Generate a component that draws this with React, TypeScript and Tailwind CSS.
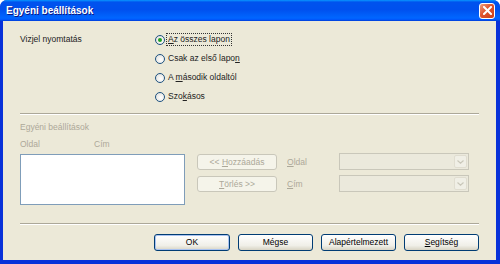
import React from 'react';

// Windows XP style "Egyéni beállítások" dialog

const font = "font-['Liberation_Sans',Arial,sans-serif]";

function Radio({ checked, focused, children }: { checked?: boolean; focused?: boolean; children: React.ReactNode }) {
  return (
    <div className="h-[19px] flex items-center">
      <span className="w-[10px] h-[10px] rounded-full border border-[#1c5180] bg-[radial-gradient(circle_at_60%_60%,#ffffff,#dcdcd7)] flex items-center justify-center shrink-0">
        {checked && <span className="w-[4px] h-[4px] rounded-full bg-[#21a121]" />}
      </span>
      <span className={`ml-[2px] px-[1px] leading-[11px] ${focused ? 'outline outline-1 outline-dotted outline-[#333]' : ''}`}>
        {children}
      </span>
    </div>
  );
}

function Separator() {
  return (
    <div className="flex flex-col">
      <div className="h-px bg-[#aca899]" />
      <div className="h-px bg-white" />
    </div>
  );
}

function XpButton({ children, className = '' }: { children: React.ReactNode; className?: string }) {
  return (
    <div
      className={`h-[17px] rounded-[3px] border border-[#003c74] bg-[linear-gradient(#ffffff,#f0efe8_70%,#d8d4c4)] flex items-center justify-center text-black ${className}`}
    >
      {children}
    </div>
  );
}

function DisabledButton({ children }: { children: React.ReactNode }) {
  return (
    <div className="w-[80px] h-[16px] rounded-[3px] border border-[#c9c7ba] bg-[#f5f4ea] flex items-center justify-center text-[#aca899]">
      {children}
    </div>
  );
}

function DisabledCombo() {
  return (
    <div className="w-[130px] h-[17px] border border-[#c9c7ba] bg-[#ebe9dc] flex justify-end p-px">
      <div className="w-[13px] h-full rounded-[2px] bg-[#f0efe6] border border-[#e0ddd0] flex items-center justify-center">
        <svg width="7" height="4" viewBox="0 0 7 4">
          <path d="M0.5 0.5 L3.5 3.2 L6.5 0.5" fill="none" stroke="#c9c7ba" strokeWidth="1.2" />
        </svg>
      </div>
    </div>
  );
}

export default function App() {
  return (
    <div className={`w-[500px] h-[264px] bg-[#0831d9] rounded-t-[7px] flex flex-col overflow-hidden text-[8.5px] ${font}`}>
      {/* Title bar */}
      <div className="h-[21px] shrink-0 bg-[linear-gradient(#0997ff,#0053ee_10%,#0050ee_45%,#0066ff_85%,#005bff_92%,#003dd7)] flex items-center pl-[6px] pr-[5px]">
        <span className="text-white font-bold text-[10px] [text-shadow:1px_1px_#0a1883] leading-none">
          Egyéni beállítások
        </span>
        <div className="ml-auto w-[16px] h-[16px] rounded-[3px] border border-white bg-[linear-gradient(135deg,#f0a080,#e0542f_45%,#c8401a)] flex items-center justify-center">
          <svg width="9" height="9" viewBox="0 0 9 9">
            <path d="M1 1 L8 8 M8 1 L1 8" stroke="white" strokeWidth="2" strokeLinecap="square" />
          </svg>
        </div>
      </div>

      {/* Client area */}
      <div className="flex-1 ml-[3px] mr-[4px] mb-[4px] bg-[#ece9d8] flex flex-col px-[17px] text-[#222]">
        {/* Watermark print */}
        <div className="flex pt-[9px]">
          <div className="w-[135px] h-[19px] flex items-center">Vizjel nyomtatás</div>
          <div className="flex flex-col">
            <Radio checked focused>
              <span className="underline">A</span>z összes lapon
            </Radio>
            <Radio>
              Csak az első lapo<span className="underline">n</span>
            </Radio>
            <Radio>
              A <span className="underline">m</span>ásodik oldaltól
            </Radio>
            <Radio>
              Szo<span className="underline">k</span>ásos
            </Radio>
          </div>
        </div>

        <div className="mt-[7px]">
          <Separator />
        </div>

        {/* Custom settings (disabled) */}
        <div className="mt-[6px] h-[13px] flex items-center text-[#aca899]">Egyéni beállítások</div>
        <div className="mt-[4px] h-[12px] flex items-center text-[#aca899]">
          <span className="w-[74px]">Oldal</span>
          <span>Cím</span>
        </div>
        <div className="mt-[4px] flex">
          <div className="w-[165px] h-[51px] border border-[#7f9db9] bg-white" />
          <div className="ml-[12px] flex flex-col gap-[6px]">
            <div className="flex items-start">
              <DisabledButton>
                &lt;&lt;&nbsp;<span className="underline">H</span>ozzáadás
              </DisabledButton>
              <span className="ml-[10px] w-[52px] h-[16px] flex items-center text-[#aca899]">
                <span className="underline">O</span>ldal
              </span>
              <div className="-mt-px">
                <DisabledCombo />
              </div>
            </div>
            <div className="flex items-start">
              <DisabledButton>
                <span className="underline">T</span>örlés&nbsp;&gt;&gt;
              </DisabledButton>
              <span className="ml-[10px] w-[52px] h-[16px] flex items-center text-[#aca899]">
                <span className="underline">C</span>ím
              </span>
              <div className="-mt-px">
                <DisabledCombo />
              </div>
            </div>
          </div>
        </div>

        <div className="mt-[18px]">
          <Separator />
        </div>

        {/* Dialog buttons */}
        <div className="mt-[9px] flex justify-end gap-[8px]">
          <XpButton className="w-[76px] shadow-[inset_0_0_0_1px_#a9c2f0]">OK</XpButton>
          <XpButton className="w-[75px]">Mégse</XpButton>
          <XpButton className="w-[75px]">Alapértelmezett</XpButton>
          <XpButton className="w-[75px]">
            <span className="underline">S</span>egítség
          </XpButton>
        </div>
      </div>
    </div>
  );
}
